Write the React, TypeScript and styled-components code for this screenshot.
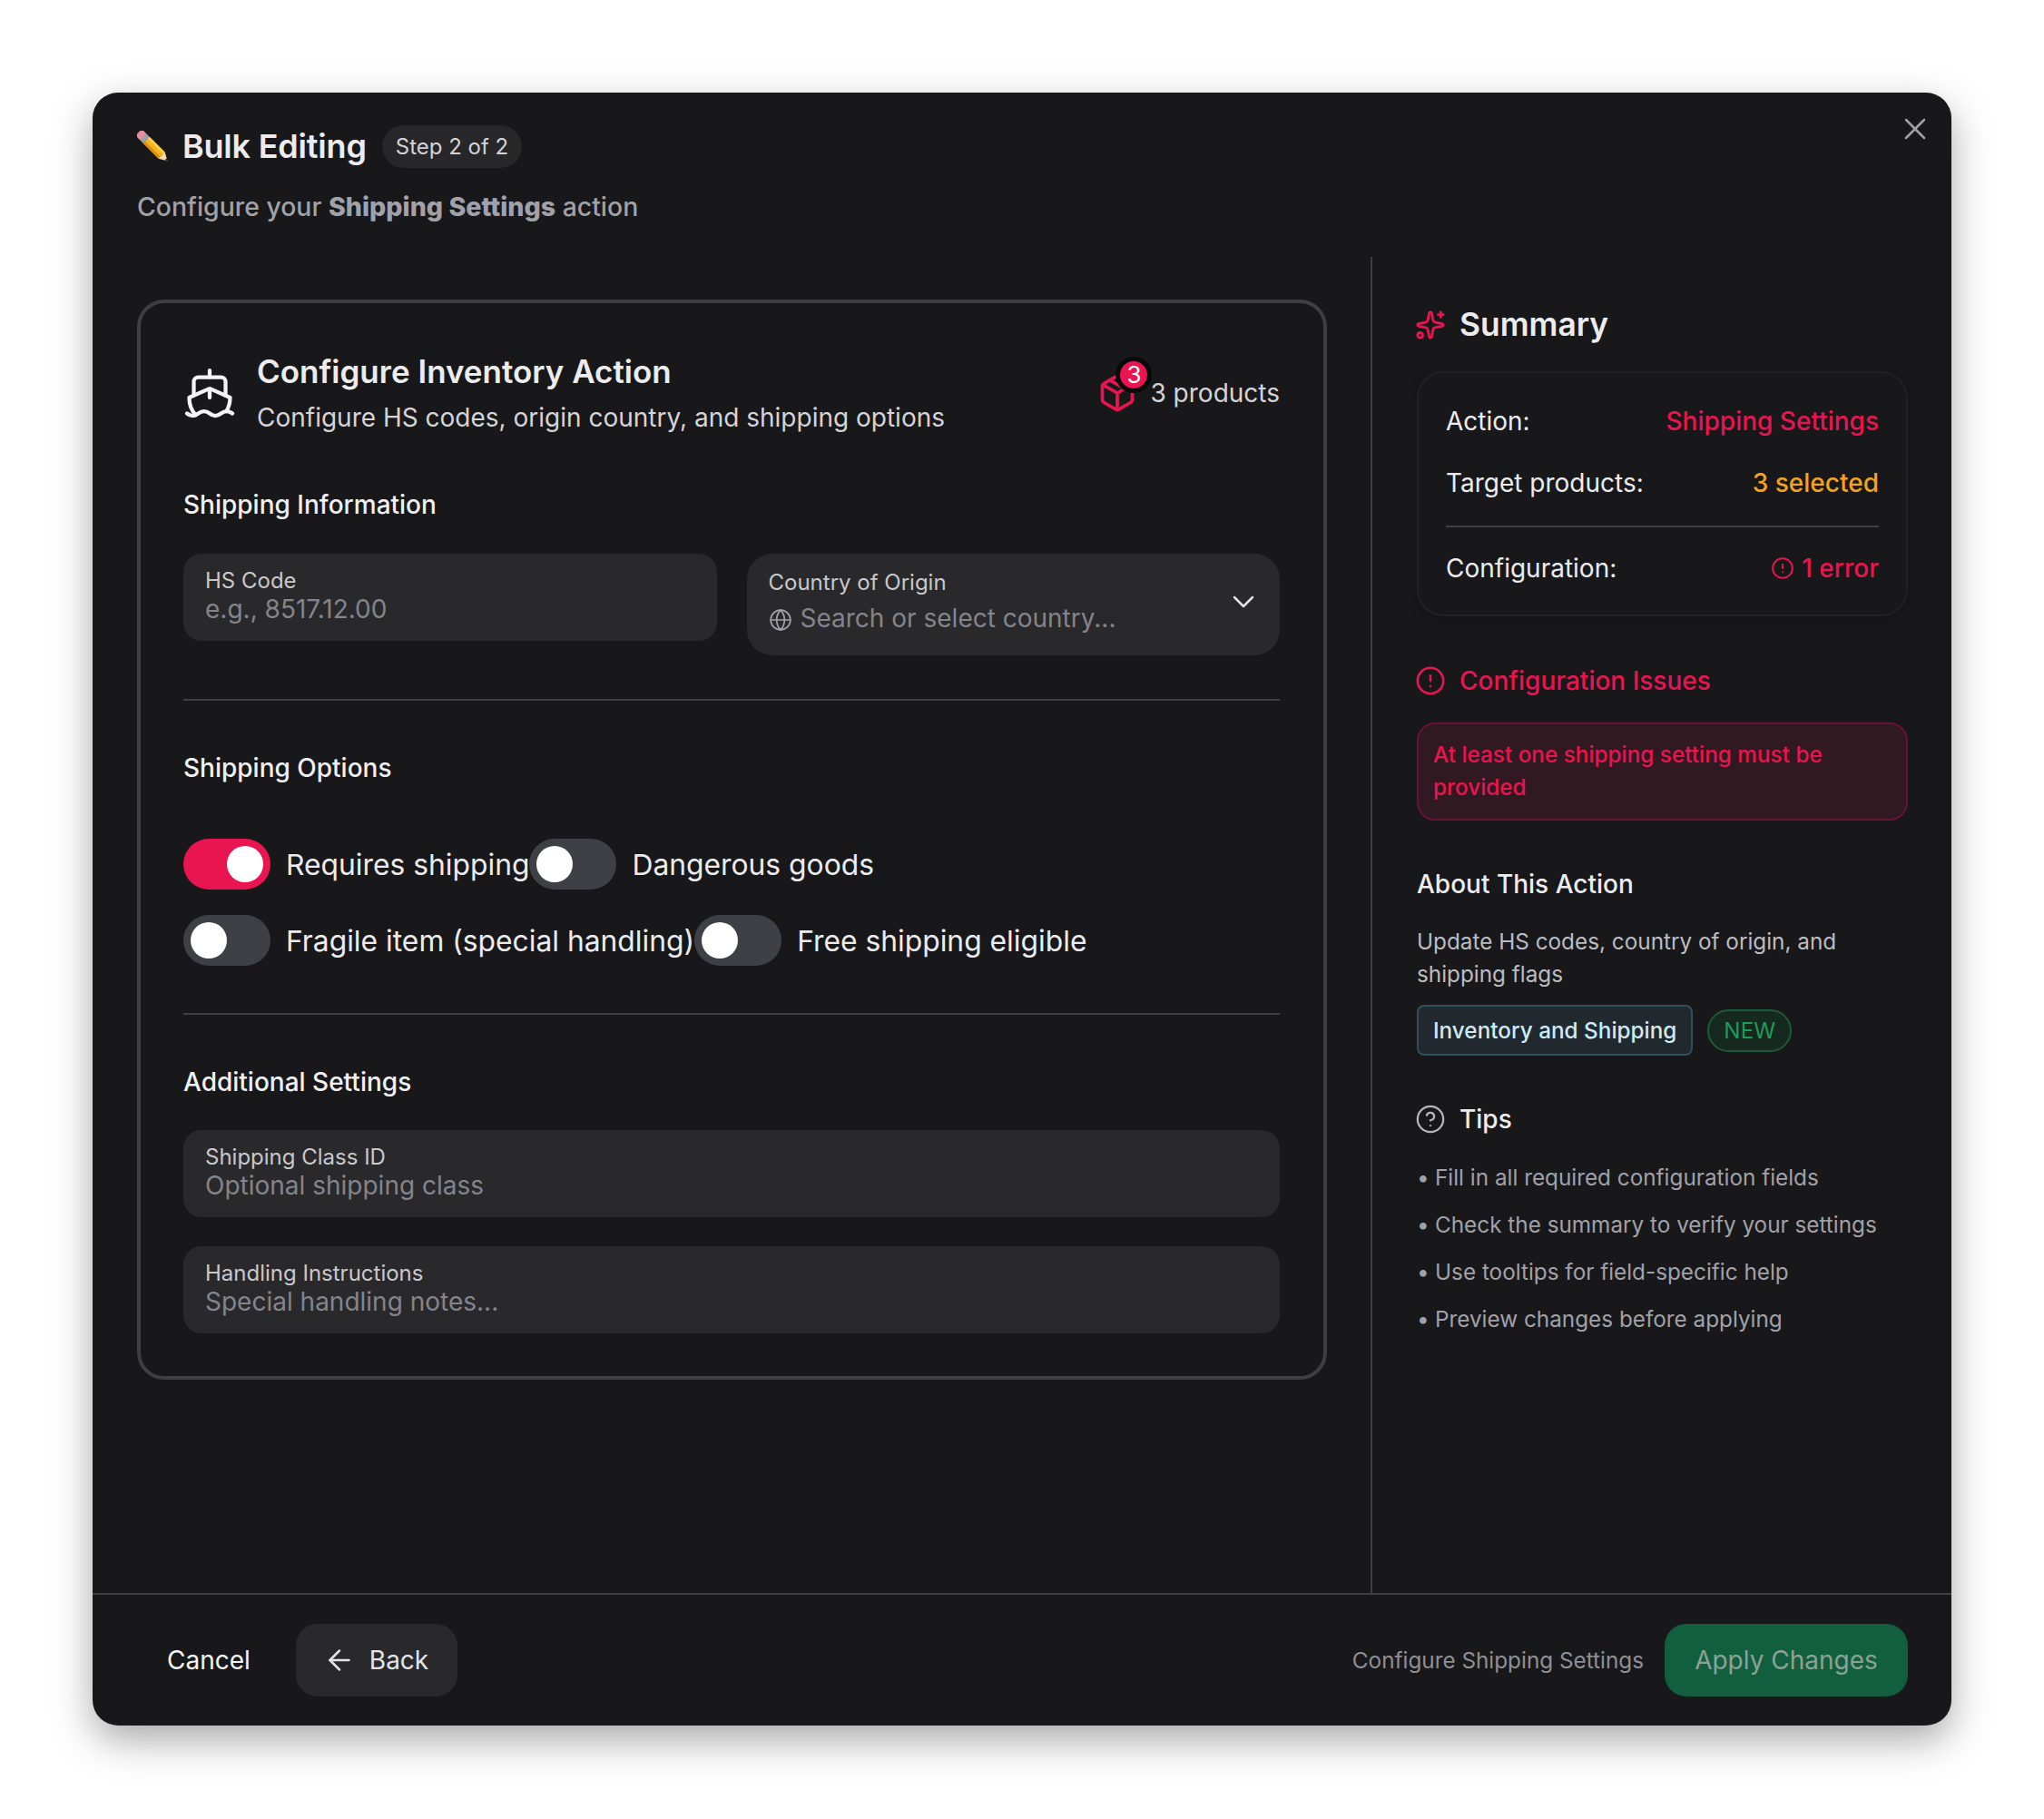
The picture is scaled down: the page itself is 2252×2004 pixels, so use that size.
import React from 'react';
import styled, {createGlobalStyle} from 'styled-components';
import {
    ArrowLeft,
    ChevronDown,
    CircleAlert,
    CircleHelp,
    Globe,
    Package,
    Ship,
    Sparkles,
    X,
} from 'lucide-react';

const ROSE = '#e91550';

const GlobalStyle = createGlobalStyle`
  html, body {
    margin: 0;
    background: #fff;
  }

  body {
    font-family: Inter, "Noto Sans", "Liberation Sans", sans-serif;
    -webkit-font-smoothing: antialiased;
  }
`

const Page = styled.div`
  width: 2252px;
  height: 2004px;
  padding: 102px 102px 103px;
  box-sizing: border-box;
`

const Modal = styled.div`
  position: relative;
  height: 100%;
  display: flex;
  flex-direction: column;
  background: #18181b;
  border-radius: 28px;
  box-shadow: 0 16px 44px rgba(0, 0, 0, .34);
  color: #ececee;
`

const CloseButton = styled.div`
  position: absolute;
  top: 20px;
  right: 20px;
  display: flex;
  color: #a1a1a8;
`

const Header = styled.header`
  padding: 36px 49px 33px;
`

const TitleRow = styled.div`
  display: flex;
  align-items: center;
  height: 47px;
`

const Title = styled.h1`
  margin: 0 17px 2px 14px;
  font-size: 36px;
  font-weight: 600;
  letter-spacing: -.2px;
`

const StepPill = styled.span`
  display: flex;
  align-items: center;
  height: 47px;
  padding: 0 15px;
  border-radius: 24px;
  background: #27272a;
  font-size: 24px;
  color: #d4d4d8;
`

const Subtitle = styled.p`
  margin: 21px 0 0;
  font-size: 28.4px;
  line-height: 44px;
  font-weight: 500;
  color: #a1a1a8;

  strong {
    font-size: 28.6px;
    font-weight: 800;
  }
`

const Main = styled.main`
  flex: 1;
  display: flex;
  min-height: 0;
`

const LeftColumn = styled.div`
  flex: 1;
  padding: 47px 48px 49px 49px;
  min-width: 0;
`

const Card = styled.section`
  border: 4px solid #3f3f43;
  border-radius: 30px;
  padding: 51px 48px 47px 47px;
`

const CardHeader = styled.div`
  display: flex;
  align-items: center;
  gap: 24px;
`

const ShipBox = styled.div`
  display: flex;
  color: #f4f4f5;
  margin: 0 -2px 0 -1px;
`

const CardHeading = styled.div`
  flex: 1;
`

const CardTitle = styled.h2`
  margin: 0;
  font-size: 35px;
  line-height: 48px;
  font-weight: 600;
`

const CardSubtitle = styled.p`
  margin: 7px 0 0;
  font-size: 28px;
  line-height: 40px;
  color: #d4d4d8;
`

const Products = styled.div`
  display: flex;
  align-items: center;
  gap: 14px;
  font-size: 28px;
  color: #d4d4d8;
`

const BadgeIcon = styled.div`
  position: relative;
  display: flex;
  color: ${ROSE};
`

const CountBadge = styled.span`
  position: absolute;
  top: -18px;
  right: -16px;
  width: 30px;
  height: 30px;
  border: 5px solid #09090b;
  border-radius: 50%;
  background: ${ROSE};
  color: #fff;
  font-size: 26px;
  display: flex;
  align-items: center;
  justify-content: center;
`

const SectionTitle = styled.h3<{ $top: number, $bottom: number }>`
  margin: ${p => p.$top}px 0 ${p => p.$bottom}px;
  font-size: 28px;
  line-height: 40px;
  font-weight: 500;
  color: #f0f0f2;
`

const FieldGrid = styled.div`
  display: grid;
  grid-template-columns: 1fr 1fr;
  column-gap: 33px;
  align-items: start;
`

const Field = styled.div`
  position: relative;
  display: flex;
  flex-direction: column;
  justify-content: center;
  height: 96px;
  padding: 0 24px 5px;
  box-sizing: border-box;
  border-radius: 20px;
  background: #29292c;
`

const FieldLabel = styled.label`
  font-size: 24px;
  line-height: 30px;
  color: #c8c8cc;
`

const Placeholder = styled.span`
  font-size: 28px;
  line-height: 32px;
  color: #84848b;
`

const SelectField = styled(Field)`
  height: 112px;
  border-radius: 28px;
  justify-content: flex-start;
  padding-top: 17px;
`

const SelectValue = styled.div`
  display: flex;
  align-items: center;
  gap: 9px;
  margin-top: 8px;
  color: #a1a1a8;

  svg {
    margin-top: 4px;
  }
`

const Chevron = styled.div`
  position: absolute;
  right: 20px;
  top: 33px;
  display: flex;
  color: #e4e4e7;
`

const Divider = styled.hr<{ $top: number }>`
  margin: ${p => p.$top}px 0 0;
  border: 0;
  height: 2px;
  background: #3f3f43;
`

const Toggles = styled.div`
  display: flex;
  flex-wrap: wrap;
  row-gap: 28px;
`

const ToggleItem = styled.div`
  display: flex;
  align-items: center;
  gap: 17px;
  font-size: 31.8px;
  color: #ececee;
`

const ToggleTrack = styled.span<{ $on?: boolean }>`
  display: flex;
  align-items: center;
  justify-content: ${p => p.$on ? 'flex-end' : 'flex-start'};
  width: 96px;
  height: 56px;
  padding: 0 8px;
  box-sizing: border-box;
  border-radius: 28px;
  background: ${p => p.$on ? ROSE : '#3f3f46'};
`

const ToggleKnob = styled.span`
  width: 40px;
  height: 40px;
  border-radius: 50%;
  background: #fff;
`

const StackedFields = styled.div`
  display: flex;
  flex-direction: column;
  gap: 32px;
`

const Aside = styled.aside`
  width: 640px;
  box-sizing: border-box;
  padding: 53px 48px 0 49px;
  border-left: 2px solid #3f3f43;
`

const AsideHeading = styled.div<{ $color?: string, $top?: number }>`
  display: flex;
  align-items: center;
  gap: 15px;
  margin-top: ${p => p.$top || 0}px;
  color: ${p => p.$color || '#ececee'};

  svg {
    flex: none;
    margin-left: -2px;
  }
`

const HeadingText = styled.span<{ $big?: boolean }>`
  font-size: ${p => p.$big ? 35.4 : 28}px;
  line-height: ${p => p.$big ? 44 : 40}px;
  font-weight: ${p => p.$big ? 600 : 500};
`

const SummaryCard = styled.div`
  margin-top: 29px;
  padding: 33px 30px 31px;
  border: 2px solid #212124;
  border-radius: 30px;
  box-shadow: 0 4px 14px rgba(0, 0, 0, .18);
`

const SummaryRow = styled.div<{ $top?: number }>`
  display: flex;
  justify-content: space-between;
  margin-top: ${p => p.$top || 0}px;
  font-size: 28px;
  line-height: 40px;
  color: #ececee;
`

const SummaryValue = styled.span<{ $color: string }>`
  display: flex;
  align-items: center;
  gap: 8px;
  font-weight: 500;
  color: ${p => p.$color};
`

const ErrorBox = styled.div`
  margin-top: 26px;
  padding: 15px 16px 17px;
  border: 2px solid #651432;
  border-radius: 20px;
  background: #311922;
  color: ${ROSE};
  font-size: 24.3px;
  line-height: 36px;
  font-weight: 500;
`

const AboutText = styled.p`
  margin: 25px 0 0;
  font-size: 24.3px;
  line-height: 36px;
  color: #bcbcc2;
`

const Chips = styled.div`
  display: flex;
  align-items: center;
  gap: 16px;
  margin-top: 16px;
`

const CategoryChip = styled.span`
  height: 56px;
  padding: 0 16px;
  display: flex;
  align-items: center;
  box-sizing: border-box;
  border: 2px solid #32505c;
  border-radius: 8px;
  background: #21292e;
  color: #cfeaf3;
  font-size: 24.3px;
  font-weight: 500;
`

const NewChip = styled.span`
  height: 47px;
  padding: 0 16px;
  display: flex;
  align-items: center;
  box-sizing: border-box;
  border: 2px solid #1c5a3b;
  border-radius: 24px;
  background: #16291f;
  color: #1f9a5a;
  font-size: 24.3px;
`

const TipList = styled.ul`
  list-style: none;
  margin: 26px 0 0;
  padding: 0;
  display: flex;
  flex-direction: column;
  gap: 16px;
`

const Tip = styled.li`
  display: flex;
  font-size: 24.3px;
  line-height: 36px;
  color: #a1a1a8;

  &::before {
    content: "•";
    width: 20px;
  }
`

const Footer = styled.footer`
  height: 146px;
  flex: none;
  box-sizing: border-box;
  border-top: 2px solid #3f3f43;
  padding: 0 48px 0 49px;
  display: flex;
  align-items: center;
  justify-content: space-between;
`

const FooterGroup = styled.div`
  display: flex;
  align-items: center;
  gap: 17px;
`

const GhostButton = styled.button`
  height: 80px;
  padding: 0 33px;
  border: 0;
  background: none;
  font: inherit;
  font-size: 28px;
  font-weight: 400;
  color: #f4f4f5;
`

const BackButton = styled(GhostButton)`
  display: flex;
  align-items: center;
  gap: 15px;
  padding: 0 32px 0 30px;
  border-radius: 24px;
  background: #29292c;
  color: #e4e4e7;
`

const Hint = styled.span`
  margin-right: 6px;
  font-size: 24.3px;
  color: #8f8f95;
`

const ApplyButton = styled(GhostButton)`
  width: 268px;
  padding: 0;
  border-radius: 24px;
  background: #125f40;
  color: #8ba294;
`

const toggles = [
    {label: 'Requires shipping', on: true},
    {label: 'Dangerous goods'},
    {label: 'Fragile item (special handling)'},
    {label: 'Free shipping eligible'},
];

const tips = [
    'Fill in all required configuration fields',
    'Check the summary to verify your settings',
    'Use tooltips for field-specific help',
    'Preview changes before applying',
];

function PencilEmoji() {
    return (
        <svg width="36" height="36" viewBox="0 0 36 36">
            <g transform="rotate(45 18 18)">
                <rect x="-5" y="13" width="8" height="10" rx="2.5" fill="#ea8a9e"/>
                <rect x="2" y="13" width="5" height="10" fill="#98a2a8"/>
                <rect x="7" y="13" width="24" height="10" fill="#f7b21c"/>
                <rect x="7" y="13" width="24" height="3" fill="#fbcf4c"/>
                <rect x="7" y="20" width="24" height="3" fill="#d98e10"/>
                <polygon points="31,13 40,18 31,23" fill="#f3dcae"/>
                <polygon points="37,16.4 41,18 37,19.6" fill="#3a3a3c"/>
            </g>
        </svg>
    );
}

function App() {
    return (
        <Page>
            <GlobalStyle/>
            <Modal>
                <CloseButton><X size={40} strokeWidth={1.5}/></CloseButton>
                <Header>
                    <TitleRow>
                        <PencilEmoji/>
                        <Title>Bulk Editing</Title>
                        <StepPill>Step 2 of 2</StepPill>
                    </TitleRow>
                    <Subtitle>Configure your <strong>Shipping Settings</strong> action</Subtitle>
                </Header>

                <Main>
                    <LeftColumn>
                        <Card>
                            <CardHeader>
                                <ShipBox><Ship size={60} strokeWidth={1.7}/></ShipBox>
                                <CardHeading>
                                    <CardTitle>Configure Inventory Action</CardTitle>
                                    <CardSubtitle>Configure HS codes, origin country, and shipping options</CardSubtitle>
                                </CardHeading>
                                <Products>
                                    <BadgeIcon>
                                        <Package size={44} strokeWidth={2}/>
                                        <CountBadge>3</CountBadge>
                                    </BadgeIcon>
                                    3 products
                                </Products>
                            </CardHeader>

                            <SectionTitle $top={56} $bottom={34}>Shipping Information</SectionTitle>
                            <FieldGrid>
                                <Field>
                                    <FieldLabel>HS Code</FieldLabel>
                                    <Placeholder>e.g., 8517.12.00</Placeholder>
                                </Field>
                                <SelectField>
                                    <FieldLabel>Country of Origin</FieldLabel>
                                    <SelectValue>
                                        <Globe size={26} strokeWidth={1.6}/>
                                        <Placeholder>Search or select country...</Placeholder>
                                    </SelectValue>
                                    <Chevron><ChevronDown size={40} strokeWidth={1.5}/></Chevron>
                                </SelectField>
                            </FieldGrid>
                            <Divider $top={48}/>

                            <SectionTitle $top={54} $bottom={58}>Shipping Options</SectionTitle>
                            <Toggles>
                                {toggles.map(toggle => {
                                    return (
                                        <ToggleItem key={toggle.label}>
                                            <ToggleTrack $on={toggle.on}><ToggleKnob/></ToggleTrack>
                                            {toggle.label}
                                        </ToggleItem>
                                    )
                                })}
                            </Toggles>
                            <Divider $top={52}/>

                            <SectionTitle $top={54} $bottom={33}>Additional Settings</SectionTitle>
                            <StackedFields>
                                <Field>
                                    <FieldLabel>Shipping Class ID</FieldLabel>
                                    <Placeholder>Optional shipping class</Placeholder>
                                </Field>
                                <Field>
                                    <FieldLabel>Handling Instructions</FieldLabel>
                                    <Placeholder>Special handling notes...</Placeholder>
                                </Field>
                            </StackedFields>
                        </Card>
                    </LeftColumn>

                    <Aside>
                        <AsideHeading>
                            <Sparkles size={34} strokeWidth={2} color={ROSE}/>
                            <HeadingText $big>Summary</HeadingText>
                        </AsideHeading>
                        <SummaryCard>
                            <SummaryRow>
                                <span>Action:</span>
                                <SummaryValue $color={ROSE}>Shipping Settings</SummaryValue>
                            </SummaryRow>
                            <SummaryRow $top={28}>
                                <span>Target products:</span>
                                <SummaryValue $color="#f2a31f">3 selected</SummaryValue>
                            </SummaryRow>
                            <Divider $top={27}/>
                            <SummaryRow $top={25}>
                                <span>Configuration:</span>
                                <SummaryValue $color={ROSE}>
                                    <CircleAlert size={26} strokeWidth={1.8}/>
                                    1 error
                                </SummaryValue>
                            </SummaryRow>
                        </SummaryCard>

                        <AsideHeading $color={ROSE} $top={51}>
                            <CircleAlert size={34} strokeWidth={1.8}/>
                            <HeadingText>Configuration Issues</HeadingText>
                        </AsideHeading>
                        <ErrorBox>At least one shipping setting must be provided</ErrorBox>

                        <AsideHeading $top={50}>
                            <HeadingText>About This Action</HeadingText>
                        </AsideHeading>
                        <AboutText>Update HS codes, country of origin, and shipping flags</AboutText>
                        <Chips>
                            <CategoryChip>Inventory and Shipping</CategoryChip>
                            <NewChip>NEW</NewChip>
                        </Chips>

                        <AsideHeading $top={50}>
                            <CircleHelp size={34} strokeWidth={1.6} color="#b4b4ba"/>
                            <HeadingText>Tips</HeadingText>
                        </AsideHeading>
                        <TipList>
                            {tips.map(tip => <Tip key={tip}>{tip}</Tip>)}
                        </TipList>
                    </Aside>
                </Main>

                <Footer>
                    <FooterGroup>
                        <GhostButton>Cancel</GhostButton>
                        <BackButton><ArrowLeft size={36} strokeWidth={1.7}/>Back</BackButton>
                    </FooterGroup>
                    <FooterGroup>
                        <Hint>Configure Shipping Settings</Hint>
                        <ApplyButton>Apply Changes</ApplyButton>
                    </FooterGroup>
                </Footer>
            </Modal>
        </Page>
    );
}

export default App;
